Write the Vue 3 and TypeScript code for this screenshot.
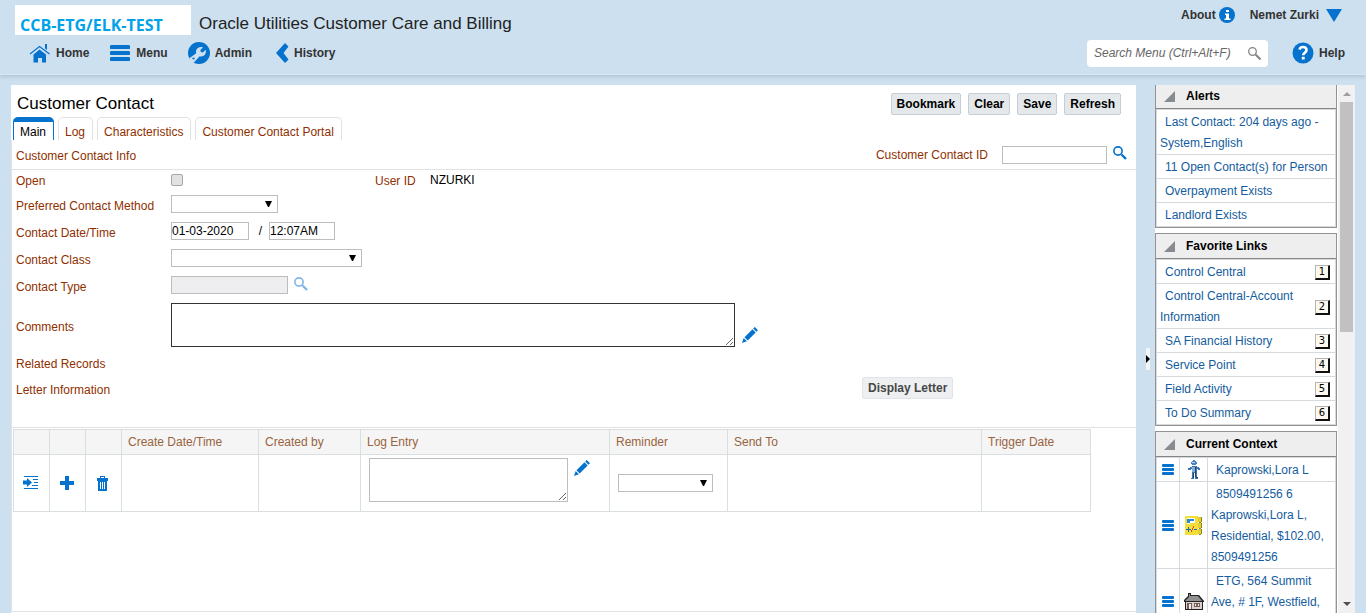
<script setup lang="ts">
import { ref } from 'vue'

interface Favorite {
  label: string
  key: number
}
interface ContextItem {
  kind: 'person' | 'account' | 'premise'
  text: string
}

const tabs: string[] = ['Main', 'Log', 'Characteristics', 'Customer Contact Portal']
const activeTab = ref('Main')
const actions: string[] = ['Bookmark', 'Clear', 'Save', 'Refresh']
const contactDate = ref('01-03-2020')
const contactTime = ref('12:07AM')
const logColumns: string[] = ['', '', '', 'Create Date/Time', 'Created by', 'Log Entry', 'Reminder', 'Send To', 'Trigger Date']

const alerts: string[] = [
  'Last Contact: 204 days ago - System,English',
  '11 Open Contact(s) for Person',
  'Overpayment Exists',
  'Landlord Exists',
]
const favorites: Favorite[] = [
  { label: 'Control Central', key: 1 },
  { label: 'Control Central-Account Information', key: 2 },
  { label: 'SA Financial History', key: 3 },
  { label: 'Service Point', key: 4 },
  { label: 'Field Activity', key: 5 },
  { label: 'To Do Summary', key: 6 },
]
const context: ContextItem[] = [
  { kind: 'person', text: 'Kaprowski,Lora L' },
  { kind: 'account', text: '8509491256 6 Kaprowski,Lora L, Residential, $102.00, 8509491256' },
  { kind: 'premise', text: 'ETG, 564 Summit Ave, # 1F, Westfield,' },
]
</script>

<template>
  <div class="app">
    <header class="top">
      <div class="top-row">
        <div class="logo">CCB-ETG/ELK-TEST</div>
        <h1 class="product">Oracle Utilities Customer Care and Billing</h1>
        <div class="user">
          <button class="bar-btn about" type="button">
            About
            <svg width="16" height="16" viewBox="0 0 16 16">
              <circle cx="8" cy="8" r="8" fill="#0572ce" />
              <path d="M7 3h3v2H7zM6 6.500h4v5h1.500V13H5.500v-1.500H7V8H6z" fill="#fff" />
            </svg>
          </button>
          <button class="bar-btn account" type="button">
            Nemet Zurki
            <svg width="16" height="13" viewBox="0 0 16 13"><path d="M0 0h16L8 13z" fill="#0572ce" /></svg>
          </button>
        </div>
      </div>
      <div class="nav-row">
        <nav class="nav">
          <button class="bar-btn home" type="button">
            <svg width="22" height="20" viewBox="0 0 22 20">
              <path d="M1 11 10.500 3.500 20.500 11" fill="none" stroke="#0572ce" stroke-width="1.200" />
              <path d="M16 1h2v6l-2-1.500z" fill="#0572ce" />
              <path d="M4.500 11.500 10.500 6.500 17 11.500V19.500h-4V15H9v4.500H4.500z" fill="#0572ce" />
            </svg>
            Home
          </button>
          <button class="bar-btn menu" type="button">
            <svg width="20" height="16" viewBox="0 0 20 16">
              <path d="M1.500 0h17a1.500 1.500 0 0 1 0 4h-17a1.500 1.500 0 0 1 0-4zM1.500 6h17a1.500 1.500 0 0 1 0 4h-17a1.500 1.500 0 0 1 0-4zM1.500 12h17a1.500 1.500 0 0 1 0 4h-17a1.500 1.500 0 0 1 0-4z" fill="#0572ce" />
            </svg>
            Menu
          </button>
          <button class="bar-btn admin" type="button">
            <svg width="22" height="22" viewBox="0 0 22 22">
              <circle cx="11" cy="11" r="11" fill="#0572ce" />
              <path d="M1 16.500 8.200 11.300C7.100 7.600 10.300 4 15 5.400L12.300 8l.5 2 2 .5 2.900-2.700c1.200 4.200-2.200 7.600-6 6.500L5 21.500z" fill="#cde0ef" />
              <circle cx="5.500" cy="16.500" r="1.100" fill="#0572ce" />
            </svg>
            Admin
          </button>
          <button class="bar-btn history" type="button">
            <svg width="13" height="20" viewBox="0 0 13 20"><path d="M9 0 12.500 3.500 7.500 10l5 6.500L9 20 0 10z" fill="#0572ce" /></svg>
            History
          </button>
        </nav>
        <div class="search">
          <input type="text" placeholder="Search Menu (Ctrl+Alt+F)" aria-label="Search Menu" />
          <button class="icon-btn" type="button" aria-label="Search">
            <svg width="13" height="13" viewBox="0 0 13 13" fill="none" stroke="#858585">
              <circle cx="4.500" cy="4.500" r="3.800" stroke-width="1.300" />
              <path d="m7.500 7.500 5 5" stroke-width="2" />
            </svg>
          </button>
        </div>
        <button class="bar-btn help" type="button">
          <svg width="22" height="22" viewBox="0 0 22 22">
            <circle cx="11" cy="11" r="10.500" fill="#0572ce" />
            <path d="M7.600 7.600C8 4 14.500 4 14.500 8c0 2.600-3.300 2.700-3.300 5.200" fill="none" stroke="#fff" stroke-width="2.600" />
            <path d="M9.800 14.800h2.900v2.700H9.800z" fill="#fff" />
          </svg>
          Help
        </button>
      </div>
    </header>

    <div class="body">
      <main class="page">
        <div class="page-head">
          <h2>Customer Contact</h2>
          <div class="actions">
            <button v-for="a in actions" :key="a" class="push" type="button">{{ a }}</button>
          </div>
        </div>
        <div class="tabs" role="tablist">
          <button
            v-for="t in tabs"
            :key="t"
            type="button"
            role="tab"
            class="tab"
            :class="{ active: t === activeTab }"
            :aria-selected="t === activeTab"
            @click="activeTab = t"
          >{{ t }}</button>
        </div>

        <div class="tab-body">
          <div class="info-row">
            <span class="info-title">Customer Contact Info</span>
            <div class="id-field">
              <label for="contact-id">Customer Contact ID</label>
              <input id="contact-id" class="text" type="text" />
              <button class="icon-btn find" type="button" aria-label="Find contact">
                <svg width="14" height="14" viewBox="0 0 14 14" fill="none" stroke="#0572ce">
                  <circle cx="5" cy="5" r="4.100" stroke-width="1.600" />
                  <path d="m8.500 8.500 4.500 4.500" stroke-width="2.400" />
                </svg>
              </button>
            </div>
          </div>

          <form class="form" @submit.prevent>
            <div class="row open">
              <label for="open">Open</label>
              <div class="field first">
                <input id="open" class="tick" type="checkbox" />
              </div>
              <span class="caption">User ID</span>
              <span class="value">NZURKI</span>
            </div>
            <div class="row">
              <label for="method">Preferred Contact Method</label>
              <div class="select method">
                <select id="method"><option></option></select>
                <svg width="7" height="6" viewBox="0 0 7 6"><path d="M0 0h7L4 6H3z" /></svg>
              </div>
            </div>
            <div class="row">
              <label for="date">Contact Date/Time</label>
              <div class="field">
                <input id="date" v-model="contactDate" class="text date" type="text" />
                <span class="slash">/</span>
                <input v-model="contactTime" class="text time" type="text" aria-label="Contact time" />
              </div>
            </div>
            <div class="row">
              <label for="class">Contact Class</label>
              <div class="select class">
                <select id="class"><option></option></select>
                <svg width="7" height="6" viewBox="0 0 7 6"><path d="M0 0h7L4 6H3z" /></svg>
              </div>
            </div>
            <div class="row">
              <label for="type">Contact Type</label>
              <div class="field">
                <input id="type" class="text type" type="text" disabled />
                <button class="icon-btn faded" type="button" aria-label="Find contact type">
                  <svg width="14" height="14" viewBox="0 0 14 14" fill="none" stroke="#0572ce">
                    <circle cx="5" cy="5" r="4.100" stroke-width="1.600" />
                    <path d="m8.500 8.500 4.500 4.500" stroke-width="2.400" />
                  </svg>
                </button>
              </div>
            </div>
            <div class="row comments">
              <label for="comments">Comments</label>
              <div class="field">
                <textarea id="comments"></textarea>
                <button class="icon-btn low" type="button" aria-label="Edit comments">
                  <svg width="16" height="16" viewBox="0 0 16 16" fill="#0572ce">
                    <path d="M11.200 1.600 12.800 0 16 3.200 14.400 4.800zM10.500 2.300l3.200 3.200-8 8-3.200-3.200zM1.700 11.100l3.200 3.200L0 16z" />
                  </svg>
                </button>
              </div>
            </div>
            <div class="row related"><span>Related Records</span></div>
            <div class="row letter">
              <span>Letter Information</span>
              <button class="push muted" type="button">Display Letter</button>
            </div>
          </form>

          <div class="log">
            <table class="log-table">
              <colgroup>
                <col class="c-tool" /><col class="c-tool" /><col class="c-tool" /><col class="c-created" /><col class="c-by" />
                <col class="c-entry" /><col class="c-reminder" /><col class="c-send" /><col class="c-trigger" />
              </colgroup>
              <thead>
                <tr><th v-for="(c, i) in logColumns" :key="i">{{ c }}</th></tr>
              </thead>
              <tbody>
                <tr>
                  <td class="tool">
                    <button class="icon-btn" type="button" aria-label="Details">
                      <svg width="16" height="14" viewBox="0 0 16 14" fill="#0572ce">
                        <path d="M1 0h14v1H1zM1 12h14v1H1zM10 3h5v1h-5zM11 6h4v1h-4zM9 9h6v1H9zM0 4.500h4V2l5 4.500L4 11V8.500H0z" />
                      </svg>
                    </button>
                  </td>
                  <td class="tool">
                    <button class="icon-btn" type="button" aria-label="Add">
                      <svg width="14" height="14" viewBox="0 0 14 14"><path d="M5 0h4v5h5v4H9v5H5V9H0V5h5z" fill="#0572ce" /></svg>
                    </button>
                  </td>
                  <td class="tool">
                    <button class="icon-btn" type="button" aria-label="Delete">
                      <svg width="11" height="15" viewBox="0 0 11 15" fill="#0572ce">
                        <path fill-rule="evenodd" d="M3 0h5v2h3v3h-1v10H1V5H0V2h3zM4 1v1h3V1zM3 6v7h1V6zM5 6v7h1V6zM7 6v7h1V6z" />
                      </svg>
                    </button>
                  </td>
                  <td></td>
                  <td></td>
                  <td class="entry">
                    <div class="entry-box">
                      <textarea aria-label="Log Entry"></textarea>
                      <button class="icon-btn" type="button" aria-label="Edit log entry">
                        <svg width="16" height="16" viewBox="0 0 16 16" fill="#0572ce">
                          <path d="M11.200 1.600 12.800 0 16 3.200 14.400 4.800zM10.500 2.300l3.200 3.200-8 8-3.200-3.200zM1.700 11.100l3.200 3.200L0 16z" />
                        </svg>
                      </button>
                    </div>
                  </td>
                  <td>
                    <div class="select reminder">
                      <select aria-label="Reminder"><option></option></select>
                      <svg width="7" height="6" viewBox="0 0 7 6"><path d="M0 0h7L4 6H3z" /></svg>
                    </div>
                  </td>
                  <td></td>
                  <td></td>
                </tr>
              </tbody>
            </table>
          </div>
        </div>
      </main>

      <div class="splitter">
        <button type="button" aria-label="Collapse side bar">
          <svg width="4" height="8" viewBox="0 0 4 8"><path d="M0 0l4 4-4 4z" /></svg>
        </button>
      </div>

      <aside class="side">
        <div class="zones">
          <section class="zone">
            <h3><svg width="11" height="11" viewBox="0 0 11 11"><path d="M11 0v11H0z" fill="#878b8f" /></svg>Alerts</h3>
            <table>
              <tbody>
                <tr v-for="a in alerts" :key="a"><td><a href="#">{{ a }}</a></td></tr>
              </tbody>
            </table>
          </section>
          <section class="zone">
            <h3><svg width="11" height="11" viewBox="0 0 11 11"><path d="M11 0v11H0z" fill="#878b8f" /></svg>Favorite Links</h3>
            <table>
              <tbody>
                <tr v-for="f in favorites" :key="f.key">
                  <td>
                    <div class="fav"><a href="#">{{ f.label }}</a><kbd>{{ f.key }}</kbd></div>
                  </td>
                </tr>
              </tbody>
            </table>
          </section>
          <section class="zone">
            <h3><svg width="11" height="11" viewBox="0 0 11 11"><path d="M11 0v11H0z" fill="#878b8f" /></svg>Current Context</h3>
            <table class="context">
              <colgroup><col class="c-menu" /><col class="c-kind" /><col /></colgroup>
              <tbody>
                <tr v-for="c in context" :key="c.kind" :class="c.kind">
                  <td class="pic">
                    <button class="icon-btn" type="button" aria-label="Context menu">
                      <svg width="12" height="11" viewBox="0 0 12 11" fill="#0572ce">
                        <rect width="12" height="3" rx="1" /><rect y="4" width="12" height="3" rx="1" /><rect y="8" width="12" height="3" rx="1" />
                      </svg>
                    </button>
                  </td>
                  <td class="pic">
                    <svg v-if="c.kind === 'person'" width="12" height="19" viewBox="0 0 12 19" shape-rendering="crispEdges">
                      <path d="M5 0h2v1h1v1h1v2H8v1H4V4H3V2h1V1h1z" fill="#4a7fc0" />
                      <path d="M4 2h3v1H4z" fill="#b9d6f7" />
                      <path d="M4 6h5v1h2v1h1v2h-2V9H9v9h1v1H7v-6H6v6H3v-1h1V9H3v1H0V8h2V7h2z" fill="#3f74ad" />
                      <path d="M4 7h3v5H4z" fill="#7eb0e6" />
                      <path d="M7 7h1v10H7zM5 13h1v5H5zM8 17h2v1H8z" fill="#1e4468" />
                    </svg>
                    <svg v-else-if="c.kind === 'account'" width="17" height="19" viewBox="0 0 17 19" shape-rendering="crispEdges">
                      <path d="M0 0h13v19H0z" fill="#f2df3c" />
                      <path d="M13 1h4v5h-4zM13 7h4v5h-4zM13 13h4v5h-4z" fill="#e5cf2a" />
                      <path d="M16 1h1v5h-1zM16 7h1v5h-1zM16 13h1v5h-1zM14 6h2v1h-2zM14 12h2v1h-2zM14 18h2v1h-2z" fill="#8c8424" />
                      <path d="M2 2h8v5H5v1H2z" fill="#fff" />
                      <path d="M2 3h7v2H5v2H2z" fill="#2589dc" />
                      <path d="M1 13h5v1H1zM3 11h1v5H3zM9 13h3v1H9z" fill="#2166b0" />
                      <path d="M8 10h1v2H8zM7 12h1v2H7zM6 14h1v2H6z" fill="#df4a1a" />
                    </svg>
                    <svg v-else width="20" height="17" viewBox="0 0 20 17">
                      <path d="M4 0h3v2h8l5 6v1h-1v8H1V9H0V7l4-4z" fill="#222" />
                      <path d="M5 1h1v2h8l4 5H1l4-4z" fill="#8f9092" />
                      <path d="M2 9h16v7H2z" fill="#dcd0cc" />
                      <path d="M3 10h5v6H3zM10 10h6v4h-6z" fill="#765f5b" />
                      <path d="M5 11h2v5H5zM11 11h1v2h-1zM14 11h1v2h-1z" fill="#eee" />
                    </svg>
                  </td>
                  <td><a href="#">{{ c.text }}</a></td>
                </tr>
              </tbody>
            </table>
          </section>
        </div>
        <div class="scroll" aria-hidden="true">
          <svg width="8" height="4" viewBox="0 0 8 4"><path d="M4 0l4 4H0z" fill="#a0a0a0" /></svg>
          <div class="thumb"></div>
          <svg width="8" height="4" viewBox="0 0 8 4"><path d="M0 0h8L4 4z" fill="#505050" /></svg>
        </div>
      </aside>
    </div>
  </div>
</template>

<style>
body {
  margin: 0;
  overflow: hidden;
}
</style>

<style scoped>
.app,
.app * {
  box-sizing: border-box;
}
.app {
  display: flex;
  flex-direction: column;
  height: 100vh;
  background: #cde0ef;
  font: 12px/14px "Liberation Sans", Arial, sans-serif;
  color: #000;
}
button,
input,
select,
textarea {
  font: inherit;
  color: inherit;
  margin: 0;
}
svg {
  display: block;
  flex: none;
}
.icon-btn,
.bar-btn {
  display: flex;
  align-items: center;
  padding: 0;
  border: 0;
  background: none;
}

/* top bar */
.top {
  flex: none;
  height: 75px;
  padding-top: 5px;
  border-bottom: 1px solid #d9e7f2;
  box-shadow: 0 2px 4px rgba(60, 90, 120, 0.2);
}
.top-row {
  display: flex;
  height: 30px;
  padding-left: 15px;
}
.logo {
  width: 176px;
  height: 30px;
  padding: 10px 0 0 5px;
  background: #fff;
  color: #00a2e8;
  font: bold 16px/20px "Open Sans", "Noto Sans", sans-serif;
  white-space: nowrap;
}
.product {
  margin: 0 0 0 8px;
  font-size: 17px;
  font-weight: normal;
  line-height: 37px;
  color: #222;
}
.user {
  display: flex;
  gap: 15px;
  height: 20px;
  margin-left: auto;
  padding-right: 24px;
}
.bar-btn {
  gap: 6px;
  font-weight: bold;
  color: #333;
}
.about {
  gap: 3px;
}
.account {
  gap: 7px;
}
.nav-row {
  display: flex;
  align-items: center;
  height: 36px;
  padding: 0 21px 0 29px;
}
.nav {
  display: flex;
  flex: 1;
}
.nav .bar-btn {
  margin-right: 21px;
}
.nav .home,
.nav .admin,
.nav .history,
.help {
  gap: 5px;
}
.nav .menu {
  margin-right: 20px;
}
.nav .admin {
  margin-right: 24px;
}
.search {
  display: flex;
  align-items: center;
  width: 181px;
  height: 27px;
  margin-right: 24px;
  padding: 0 7px;
  border-radius: 4px;
  background: #fff;
}
.search input {
  flex: 1;
  min-width: 0;
  padding: 0;
  border: 0;
  outline: 0;
  background: none;
  font-style: italic;
}
.search input::placeholder {
  color: #666;
}

/* page */
.body {
  display: flex;
  flex: 1;
  min-height: 0;
  padding: 10px 11px 0;
}
.page {
  display: flex;
  flex: 1;
  flex-direction: column;
  min-width: 0;
  background: #fff;
}
.page-head {
  display: flex;
  justify-content: space-between;
  align-items: center;
  height: 32px;
  padding: 5px 15px 0 6px;
}
.page-head h2 {
  margin: 0;
  font-size: 17px;
  font-weight: normal;
  line-height: 20px;
}
.actions {
  display: flex;
  gap: 7px;
}
.push {
  height: 22px;
  padding: 0 5px;
  border: 1px solid #c4ced7;
  border-radius: 2px;
  background: #e4e8ea;
  font-weight: bold;
}
.push.muted {
  border-color: #dfe4ec;
  background: #eeeff1;
  color: #474747;
}
.tabs {
  display: flex;
  gap: 4px;
  height: 23px;
  padding-left: 2px;
}
.tab {
  padding: 5px 7px 0 6px;
  border: 1px solid #e2e2e2;
  border-bottom: 0;
  border-radius: 5px 5px 0 0;
  background: #fff;
  color: #8f2f00;
}
.tab.active {
  padding-top: 1px;
  border-color: #0572ce;
  border-top-width: 5px;
  color: #000;
}
.tab-body {
  display: flex;
  flex: 1;
  flex-direction: column;
  margin-bottom: 1px;
  border-bottom: 1px solid #e2e2e2;
  border-left: 1px solid #e2e2e2;
  color: #8f2f00;
}
.info-row {
  display: flex;
  flex: none;
  justify-content: space-between;
  align-items: center;
  height: 30px;
  padding: 0 9px 0 4px;
  border-bottom: 1px solid #e2e2e2;
}
.info-title {
  padding-top: 2px;
}
.id-field {
  display: flex;
  align-items: center;
}
.id-field .text {
  width: 105px;
  margin: 0 6px 0 14px;
}
.find {
  padding-bottom: 3px;
}
.text {
  height: 18px;
  padding: 0;
  border: 1px solid #bdbdbd;
  background: #fff;
  color: #000;
}
.form {
  flex: none;
  padding-left: 4px;
}
.row {
  display: flex;
  align-items: center;
  height: 27px;
}
.row > :first-child {
  width: 155px;
  padding-top: 4px;
}
.field {
  display: flex;
  align-items: center;
}
.row.open {
  height: 20px;
}
.row.open > :first-child,
.row.related > :first-child {
  padding-top: 2px;
}
.first {
  width: 204px;
}
.tick {
  appearance: none;
  width: 12px;
  height: 12px;
  border: 1px solid #a6a6a6;
  border-radius: 2px;
  background: #e2e2e2;
}
.caption {
  width: 55px;
  padding-top: 2px;
}
.value {
  color: #000;
}
.select {
  position: relative;
  height: 18px;
}
.select select {
  appearance: none;
  width: 100%;
  height: 100%;
  padding: 0 20px 0 4px;
  border: 1px solid #bdbdbd;
  border-radius: 0;
  background: #fff;
  color: #000;
}
.select svg {
  position: absolute;
  top: 6px;
  right: 6px;
  pointer-events: none;
}
.method {
  width: 107px;
}
.class {
  width: 191px;
}
.date {
  width: 78px;
}
.time {
  width: 66px;
}
.slash {
  width: 20px;
  text-align: center;
  padding-left: 3px;
  color: #000;
}
.type {
  width: 117px;
  margin-right: 6px;
  background: #eeeef0;
}
.faded {
  padding-bottom: 1px;
  opacity: 0.5;
}
.comments {
  height: 53px;
}
textarea {
  display: block;
  padding: 2px;
  border: 1px solid #bdbdbd;
  background: #fff;
  color: #000;
  resize: both;
}
#comments {
  width: 564px;
  height: 44px;
  margin-right: 7px;
  border-color: #333;
}
.low {
  margin-top: 20px;
}
.related {
  height: 23px;
}
.letter {
  height: 28px;
}
.letter .push {
  margin-left: 691px;
}

/* log grid */
.log {
  margin-top: 25px;
  padding: 1px 0 0 1px;
  border-top: 1px solid #e2e2e2;
}
.log-table {
  width: 1078px;
  border-collapse: collapse;
  table-layout: fixed;
}
.c-tool {
  width: 36px;
}
.c-created {
  width: 137px;
}
.c-by {
  width: 102px;
}
.c-entry {
  width: 249px;
}
.c-reminder {
  width: 118px;
}
.c-send {
  width: 254px;
}
.c-trigger {
  width: 109px;
}
.log-table th {
  height: 25px;
  padding: 0 6px;
  border: 1px solid #d9dee1;
  background: #f5f5f5;
  color: #996440;
  font-weight: normal;
  text-align: left;
}
.log-table td {
  height: 57px;
  padding: 0 8px;
  border: 1px solid #d9dee1;
}
.log-table .tool {
  padding: 0 2px 0 0;
}
.tool .icon-btn {
  margin: 0 auto;
}
.log-table .entry {
  padding: 3px 8px 9px;
}
.entry-box {
  display: flex;
  align-items: flex-start;
  gap: 6px;
}
.entry-box textarea {
  width: 199px;
  height: 44px;
}
.entry-box .icon-btn {
  margin-top: 2px;
}
.reminder {
  width: 95px;
}

/* splitter */
.splitter {
  display: flex;
  flex: none;
  align-items: center;
  justify-content: center;
  width: 19px;
  padding-left: 5px;
}
.splitter button {
  width: 4px;
  height: 22px;
  margin-top: 20px;
  padding: 0;
  border: 0;
  background: #f4f4f4;
}

/* side bar */
.side {
  display: flex;
  flex: none;
  width: 200px;
  overflow: hidden;
  background: #fff;
}
.zones {
  display: flex;
  flex: 1;
  flex-direction: column;
  gap: 5px;
  margin: -2px 1px 0 0;
}
.zone {
  flex: none;
  border: 1px solid #929292;
}
.zone h3 {
  display: flex;
  align-items: center;
  gap: 11px;
  height: 25px;
  margin: 0;
  padding: 0 0 0 8px;
  border-bottom: 1px solid #858585;
  background: #eeeeee;
  font-size: 12px;
}
.zone table {
  width: 100%;
  border-collapse: collapse;
  table-layout: fixed;
}
.zone td {
  padding: 2px 5px 0 3px;
  border: 1px solid #d5dade;
  line-height: 21px;
  text-indent: 5px;
  vertical-align: top;
}
.zone a {
  color: #145c9e;
  text-decoration: none;
}
.fav {
  display: flex;
  justify-content: space-between;
  align-items: center;
}
.fav kbd {
  flex: none;
  width: 15px;
  height: 15px;
  border: 1px solid #b5b5b5;
  border-right: 2px solid #111;
  border-bottom: 2px solid #111;
  background: #fcf9f0;
  color: #000;
  font: 10px/12px "DejaVu Sans", sans-serif;
  text-align: center;
  text-indent: 0;
}
.c-menu {
  width: 23px;
}
.c-kind {
  width: 28px;
}
.zone .pic {
  padding: 0;
  vertical-align: middle;
}
.pic > * {
  margin: 0 auto;
}
.premise {
  height: 66px;
}
.scroll {
  display: flex;
  flex: none;
  flex-direction: column;
  align-items: center;
  width: 17px;
  padding: 7px 0;
  background: #f1f1f1;
}
.scroll .thumb {
  width: 13px;
  height: 230px;
  margin: 6px 0 auto;
  background: #c1c1c1;
}
</style>
